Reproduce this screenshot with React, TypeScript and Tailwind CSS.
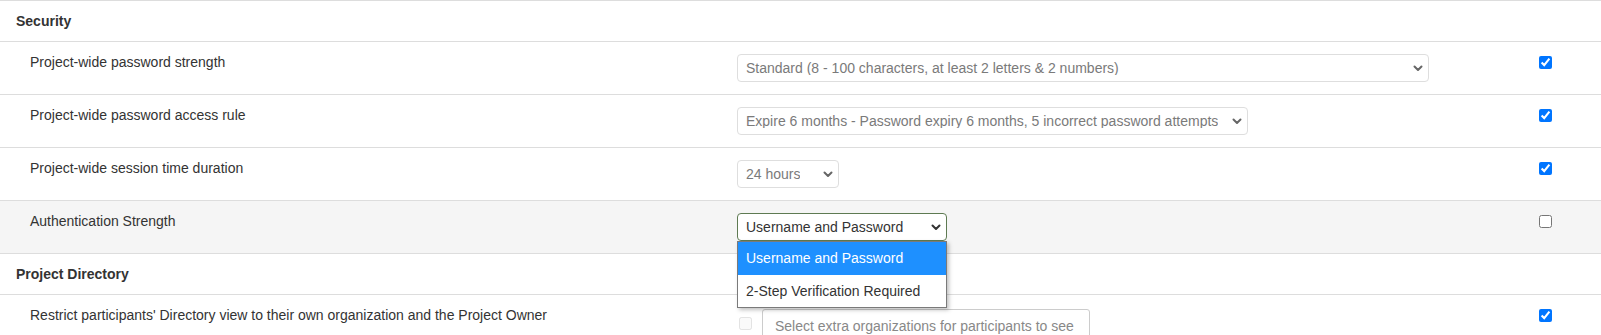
import React from "react";

const Chevron = ({ color }: { color: string }) => (
  <svg width="10" height="7" viewBox="0 0 10 7" className="shrink-0">
    <path d="M1.5 1.5L5 5l3.5-3.5" stroke={color} strokeWidth="2" fill="none" strokeLinecap="round" strokeLinejoin="round" />
  </svg>
);

function Select({ text, widthClass, active }: { text: string; widthClass: string; active?: boolean }) {
  return (
    <div
      className={`${widthClass} h-[28px] flex items-center justify-between rounded-[4px] border bg-white pl-[8px] pr-[5px] text-[14px] leading-none ${
        active ? "border-[#5e7a52] text-[#333]" : "border-[#dedede] text-[#7a7a7a]"
      }`}
    >
      <span className="whitespace-nowrap overflow-hidden">{text}</span>
      <Chevron color={active ? "#333" : "#666"} />
    </div>
  );
}

function Check({ checked }: { checked: boolean }) {
  return <input type="checkbox" checked={checked} readOnly className="w-[13px] h-[13px] m-0" />;
}

function Row({
  label,
  children,
  checked,
  grey,
}: {
  label: string;
  children: React.ReactNode;
  checked: boolean;
  grey?: boolean;
}) {
  return (
    <div className={`grid grid-cols-[722px_768px_1fr] border-t border-[#ddd] h-[53px] ${grey ? "bg-[#f5f5f5]" : "bg-white"}`}>
      <div className="pl-[30px] pt-[10px] leading-[20px]">{label}</div>
      <div className="pl-[15px] pt-[12px] relative">{children}</div>
      <div className="flex justify-center pt-[14px]">
        <Check checked={checked} />
      </div>
    </div>
  );
}

function Header({ title }: { title: string }) {
  return (
    <div className="border-t border-[#ddd] h-[41px] flex items-center pl-[16px] font-bold bg-white">{title}</div>
  );
}

export default function App() {
  return (
    <div className="w-[1601px] h-[335px] overflow-hidden bg-white text-[14px] text-[#333] font-['Liberation_Sans',Arial,sans-serif]">
      <Header title="Security" />
      <Row label="Project-wide password strength" checked>
        <Select widthClass="w-[692px]" text="Standard (8 - 100 characters, at least 2 letters & 2 numbers)" />
      </Row>
      <Row label="Project-wide password access rule" checked>
        <Select
          widthClass="w-[511px]"
          text="Expire 6 months - Password expiry 6 months, 5 incorrect password attempts"
        />
      </Row>
      <Row label="Project-wide session time duration" checked>
        <Select widthClass="w-[102px]" text="24 hours" />
      </Row>
      <div className="relative z-10">
        <Row label="Authentication Strength" checked={false} grey>
          <Select widthClass="w-[210px]" text="Username and Password" active />
          <div className="absolute left-[15px] top-[40px] w-[210px] border border-[#7a7a7a] bg-white shadow-[2px_2px_4px_rgba(0,0,0,0.25)]">
            <div className="h-[33px] flex items-center pl-[8px] bg-[#1e90ff] text-white">Username and Password</div>
            <div className="h-[32px] flex items-center pl-[8px] text-[#333]">2-Step Verification Required</div>
          </div>
        </Row>
      </div>
      <Header title="Project Directory" />
      <div className="grid grid-cols-[722px_768px_1fr] border-t border-[#ddd] h-[53px] bg-white">
        <div className="pl-[30px] pt-[10px] leading-[20px]">
          Restrict participants' Directory view to their own organization and the Project Owner
        </div>
        <div className="pl-[15px] pt-[14px] flex items-start">
          <input type="checkbox" disabled readOnly className="w-[13px] h-[13px] m-0 ml-[2px] mt-[8px] opacity-60" />
          <div className="ml-[10px] w-[328px] h-[34px] border border-[#ccc] rounded-[3px] flex items-center pl-[12px] text-[#888]">
            Select extra organizations for participants to see
          </div>
        </div>
        <div className="flex justify-center pt-[14px]">
          <Check checked />
        </div>
      </div>
    </div>
  );
}
